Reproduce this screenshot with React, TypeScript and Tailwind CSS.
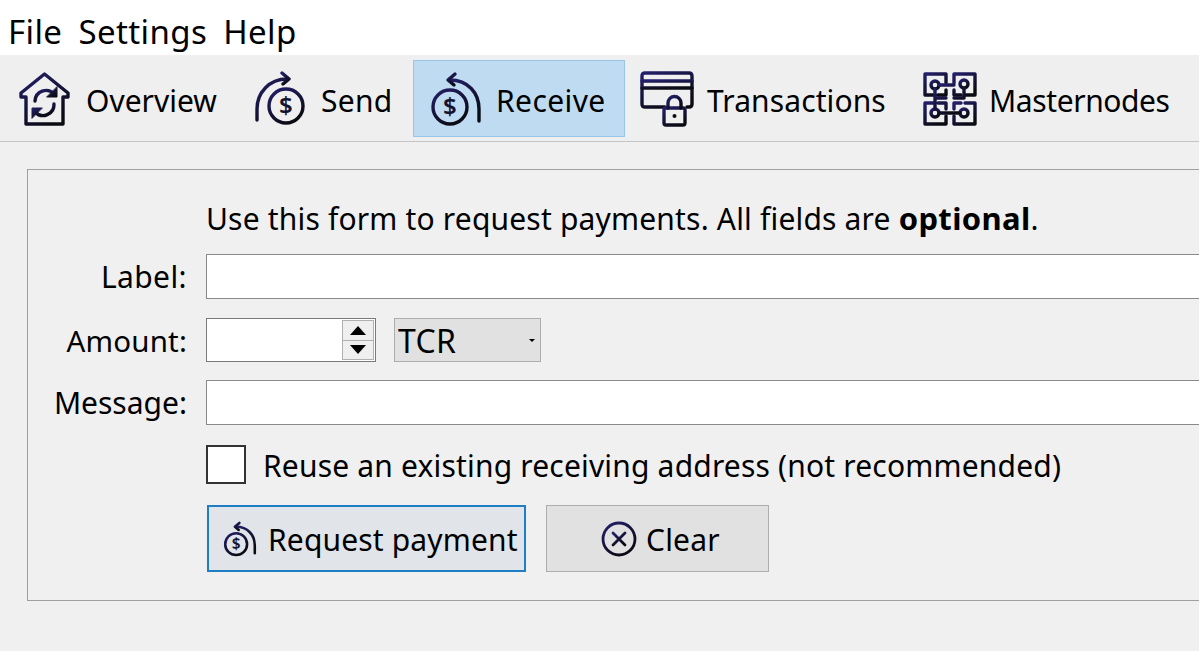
import { ReactNode } from "react";

const grad = "#241f6b";

function Defs({ id }: { id: string }) {
  return (
    <defs>
      <linearGradient id={id} x1="0" y1="0" x2="0.6" y2="1">
        <stop offset="0" stopColor={grad} />
        <stop offset="1" stopColor="#0b0b14" />
      </linearGradient>
    </defs>
  );
}

function HomeIcon() {
  return (
    <svg width="56" height="56" viewBox="0 0 56 56" fill="none" stroke="url(#g1)" strokeWidth="3.4" strokeLinecap="round" strokeLinejoin="round">
      <Defs id="g1" />
      <path d="M27.5 3 L4 22 L4 26 L9 26 L9 53 L46 53 L46 26 L51 26 L51 22 Z" />
      <path d="M18 30 A11 11 0 0 1 37 23" />
      <path d="M40 16 L40 26 L30 26 Z" fill="url(#g1)" strokeWidth="1" />
      <path d="M37 33 A11 11 0 0 1 18 41" />
      <path d="M15 47 L15 37 L25 37 Z" fill="url(#g1)" strokeWidth="1" />
    </svg>
  );
}

function SendIcon() {
  return (
    <svg width="56" height="56" viewBox="0 0 56 56" fill="none" stroke="url(#g2)" strokeWidth="3.4" strokeLinecap="round" strokeLinejoin="round">
      <Defs id="g2" />
      <path d="M4 49 L4 38 C4 22 16 8 34 8" />
      <path d="M29 2 L36 8 L30 13" />
      <circle cx="33" cy="35" r="17" />
      <text x="33" y="43" textAnchor="middle" fontSize="24" fontWeight="600" fontFamily="'Noto Sans', sans-serif" fill="#14132e" stroke="none">$</text>
    </svg>
  );
}

function ReceiveIcon({ size = 56, id = "g3" }: { size?: number; id?: string }) {
  return (
    <svg width={size} height={size} viewBox="0 0 56 56" fill="none" stroke={`url(#${id})`} strokeWidth={size < 40 ? 4 : 3.4} strokeLinecap="round" strokeLinejoin="round">
      <Defs id={id} />
      <path d="M51 50 L51 38 C51 22 40 9 22 9" />
      <path d="M27 3 L20 9 L26 14" />
      <circle cx="22" cy="36" r="17" />
      <text x="22" y="44" textAnchor="middle" fontSize="24" fontWeight="600" fontFamily="'Noto Sans', sans-serif" fill="#14132e" stroke="none">$</text>
    </svg>
  );
}

function CardIcon() {
  return (
    <svg width="54" height="56" viewBox="0 0 54 56" fill="none" stroke="url(#g4)" strokeWidth="3.4" strokeLinecap="round" strokeLinejoin="round">
      <Defs id="g4" />
      <path d="M25 36 L5 36 Q2 36 2 33 L2 5 Q2 2 5 2 L49 2 Q52 2 52 5 L52 33 Q52 36 49 36 L47 36" />
      <path d="M2 10 L52 10 M2 17 L52 17" />
      <path d="M9 26 L15 26 M19 26 L24 26" />
      <rect x="24" y="37" width="21" height="17" rx="2" />
      <path d="M28 37 L28 32 A6.5 6.5 0 0 1 41 32 L41 37" />
      <circle cx="34.5" cy="45" r="2" fill="#0b0b14" stroke="none" />
      <path d="M34.5 45 L34.5 49" strokeWidth="2" />
    </svg>
  );
}

function NodesIcon() {
  return (
    <svg width="54" height="54" viewBox="0 0 54 54" fill="none" stroke="url(#g5)" strokeWidth="3.4" strokeLinecap="round" strokeLinejoin="round">
      <Defs id="g5" />
      <path d="M23 2 L2 2 L2 23 L12 23 M23 2 L23 11 M15 23 L23 23 L23 18" />
      <path d="M31 2 L52 2 L52 23 L42 23 M31 2 L31 11 M38 23 L31 23 L31 18" />
      <path d="M2 31 L2 52 L23 52 L23 44 M2 31 L12 31 M15 31 L23 31 L23 37" />
      <path d="M52 31 L52 52 L31 52 L31 44 M52 31 L42 31 M38 31 L31 31 L31 37" />
      <circle cx="12" cy="13" r="4" />
      <circle cx="41" cy="12" r="4" />
      <circle cx="12" cy="41" r="4" />
      <circle cx="41" cy="41" r="4" />
      <path d="M16 13 L31 13 M12 17 L12 37 M41 16 L41 26 L31 26 M16 41 L37 41 M23 26 L12 26" />
    </svg>
  );
}

function ClearIcon() {
  return (
    <svg width="36" height="36" viewBox="0 0 36 36" fill="none" stroke="url(#g6)" strokeWidth="2.8" strokeLinecap="round">
      <Defs id="g6" />
      <circle cx="18" cy="18" r="16" />
      <path d="M12 12 L24 24 M24 12 L12 24" />
    </svg>
  );
}

function ToolItem({ icon, label, className, textClass }: { icon: ReactNode; label: string; className: string; textClass?: string }) {
  return (
    <div className={`flex items-center h-[77px] ${className}`}>
      {icon}
      <span className={`pt-[5px] ${textClass ?? ""}`}>{label}</span>
    </div>
  );
}

export default function App() {
  return (
    <div className="w-[1199px] h-[651px] overflow-hidden bg-[#f0f0f0] text-[30px] leading-[40px] tracking-[0.18px] text-black font-['Noto_Sans','Open_Sans',sans-serif]">
      <div className="h-[55px] bg-white flex items-center pl-[8px] gap-[16px] pt-[9px] text-[33px] tracking-[0.4px]">
        <span>File</span>
        <span>Settings</span>
        <span>Help</span>
      </div>
      <div className="h-[86px] mt-px bg-[#efefef] border-b border-[#c4c4c4] flex items-start pt-[4px] pl-[17px]">
        <ToolItem icon={<HomeIcon />} label="Overview" className="gap-[13px] w-[230px]" textClass="tracking-normal" />
        <ToolItem icon={<SendIcon />} label="Send" className="gap-[12px] w-[166px] pl-[6px]" textClass="tracking-[0.25px]" />
        <ToolItem
          icon={<ReceiveIcon />}
          label="Receive"
          className="gap-[12px] w-[212px] pl-[14px] bg-[#bfdbf2] border border-[#99c5e8]"
          textClass="tracking-[0.4px]"
        />
        <ToolItem icon={<CardIcon />} label="Transactions" className="gap-[13px] w-[283px] pl-[15px]" textClass="tracking-[0.1px]" />
        <ToolItem icon={<NodesIcon />} label="Masternodes" className="gap-[12px] pl-[15px] whitespace-nowrap" textClass="tracking-[-0.4px]" />
      </div>

      <div className="mt-[27px] ml-[27px] w-[1400px] h-[432px] border border-[#a0a0a0] pt-[28px] grid grid-cols-[159px_1fr] gap-x-[19px] content-start">
        <div />
        <div className="h-[56px]">
          Use this form to request payments. All fields are <b className="text-[31px] tracking-[0.35px]">optional</b>.
        </div>

        <div className="h-[45px] flex items-center justify-end tracking-[0.4px] text-[30px]">Label:</div>
        <div className="h-[45px] bg-white border border-[#8a8a8a]" />

        <div className="h-[44px] mt-[19px] flex items-center justify-end pt-px text-[29.5px]">Amount:</div>
        <div className="h-[44px] mt-[19px] flex gap-[18px]">
          <div className="w-[170px] bg-white border border-[#7a7a7a] flex justify-end p-px">
            <div className="w-[32px] flex flex-col border border-[#b0b0b0] bg-[#efefef]">
              <div className="flex-1 flex items-center justify-center border-b border-[#b0b0b0]">
                <svg width="16" height="9" viewBox="0 0 16 9"><path d="M8 0 L16 9 L0 9 Z" fill="#000" /></svg>
              </div>
              <div className="flex-1 flex items-center justify-center">
                <svg width="16" height="9" viewBox="0 0 16 9"><path d="M0 0 L16 0 L8 9 Z" fill="#000" /></svg>
              </div>
            </div>
          </div>
          <div className="w-[147px] bg-[#e1e1e1] border border-[#adadad] flex items-center justify-between pl-[3px] pr-[4px] pt-px">
            <span className="text-[32px] tracking-[0.3px]">TCR</span>
            <svg width="6" height="3" viewBox="0 0 6 3" className="mr-[1px]"><path d="M0 0 L6 0 L3 3 Z" fill="#000" /></svg>
          </div>
        </div>

        <div className="h-[45px] mt-[18px] flex items-center justify-end pt-px tracking-normal text-[30px]">Message:</div>
        <div className="h-[45px] mt-[18px] bg-white border border-[#8a8a8a]" />

        <div />
        <div className="mt-[20px] h-[39px] flex items-center gap-[17px]">
          <div className="w-[40px] h-[39px] bg-white border-2 border-[#333333]" />
          <span className="pt-[2px]">Reuse an existing receiving address (not recommended)</span>
        </div>

        <div />
        <div className="mt-[21px] flex gap-[20px] pl-px">
          <div className="w-[319px] h-[67px] bg-[#e1e4e8] border-2 border-[#1f7fc4] flex items-center pl-[13px] gap-[10px] whitespace-nowrap">
            <ReceiveIcon size={36} id="g7" />
            <span className="pt-[3px] tracking-[0.15px]">Request payment</span>
          </div>
          <div className="w-[223px] h-[67px] bg-[#e1e1e1] border border-[#adadad] flex items-center pl-[54px] gap-[9px]">
            <ClearIcon />
            <span className="pt-[3px]">Clear</span>
          </div>
        </div>
      </div>
    </div>
  );
}
